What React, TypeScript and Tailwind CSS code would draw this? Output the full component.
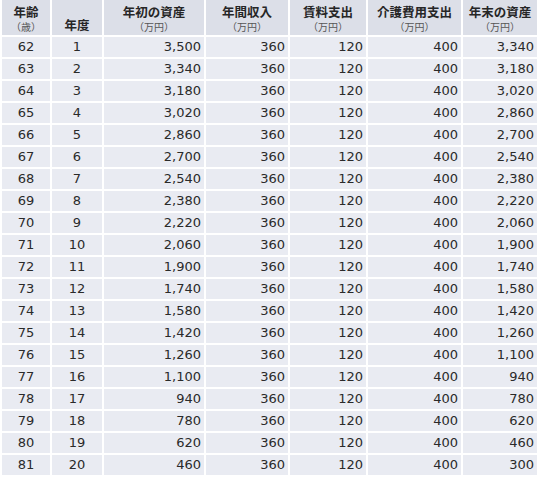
// App.tsx
const rows = Array.from({ length: 20 }, (_, i) => {
  const start = 3500 - 160 * i;
  return {
    age: 62 + i,
    year: i + 1,
    start,
    income: 360,
    rent: 120,
    care: 400,
    end: start - 160,
  };
});

const fmt = (n: number) => n.toLocaleString("en-US");

const heads = ["年初の資産", "年間収入", "賃料支出", "介護費用支出", "年末の資産"];

const Head = ({ title, sub }: { title: string; sub: string }) => (
  <div className="flex flex-col items-center bg-[#dcdfe8] pt-[4px]">
    <span className="text-[12.5px] leading-[16px] font-bold text-[#262626]">
      {title}
    </span>
    <span className="text-[10px] leading-[14px] text-[#555] [font-feature-settings:'halt']">
      {sub}
    </span>
  </div>
);

export default function App() {
  return (
    <div className="w-[540px] h-[479px] bg-white pl-[2px]">
      <div className="grid grid-cols-[48px_50px_100px_82px_76px_93px_74px] grid-rows-[35px_repeat(20,20px)] gap-[2px] font-['Noto_Sans_CJK_JP',sans-serif]">
        <Head title="年齢" sub="（歳）" />
        <div className="flex justify-center bg-[#dcdfe8] pt-[18px]">
          <span className="text-[12.5px] leading-[14px] font-bold text-[#262626]">
            年度
          </span>
        </div>
        {heads.map((h) => (
          <Head key={h} title={h} sub="（万円）" />
        ))}

        {rows.map((r) =>
          [
            { v: String(r.age), c: true },
            { v: String(r.year), c: true },
            { v: fmt(r.start) },
            { v: fmt(r.income) },
            { v: fmt(r.rent) },
            { v: fmt(r.care) },
            { v: fmt(r.end) },
          ].map((cell, j) => (
            <div
              key={`${r.age}-${j}`}
              className={`flex items-center bg-[#e9ebf2] text-[13px] leading-[20px] text-[#2a2a2a] font-['DejaVu_Sans',sans-serif] ${
                cell.c ? "justify-center" : "justify-end pr-[3px]"
              }`}
            >
              {cell.v}
            </div>
          ))
        )}
      </div>
    </div>
  );
}
